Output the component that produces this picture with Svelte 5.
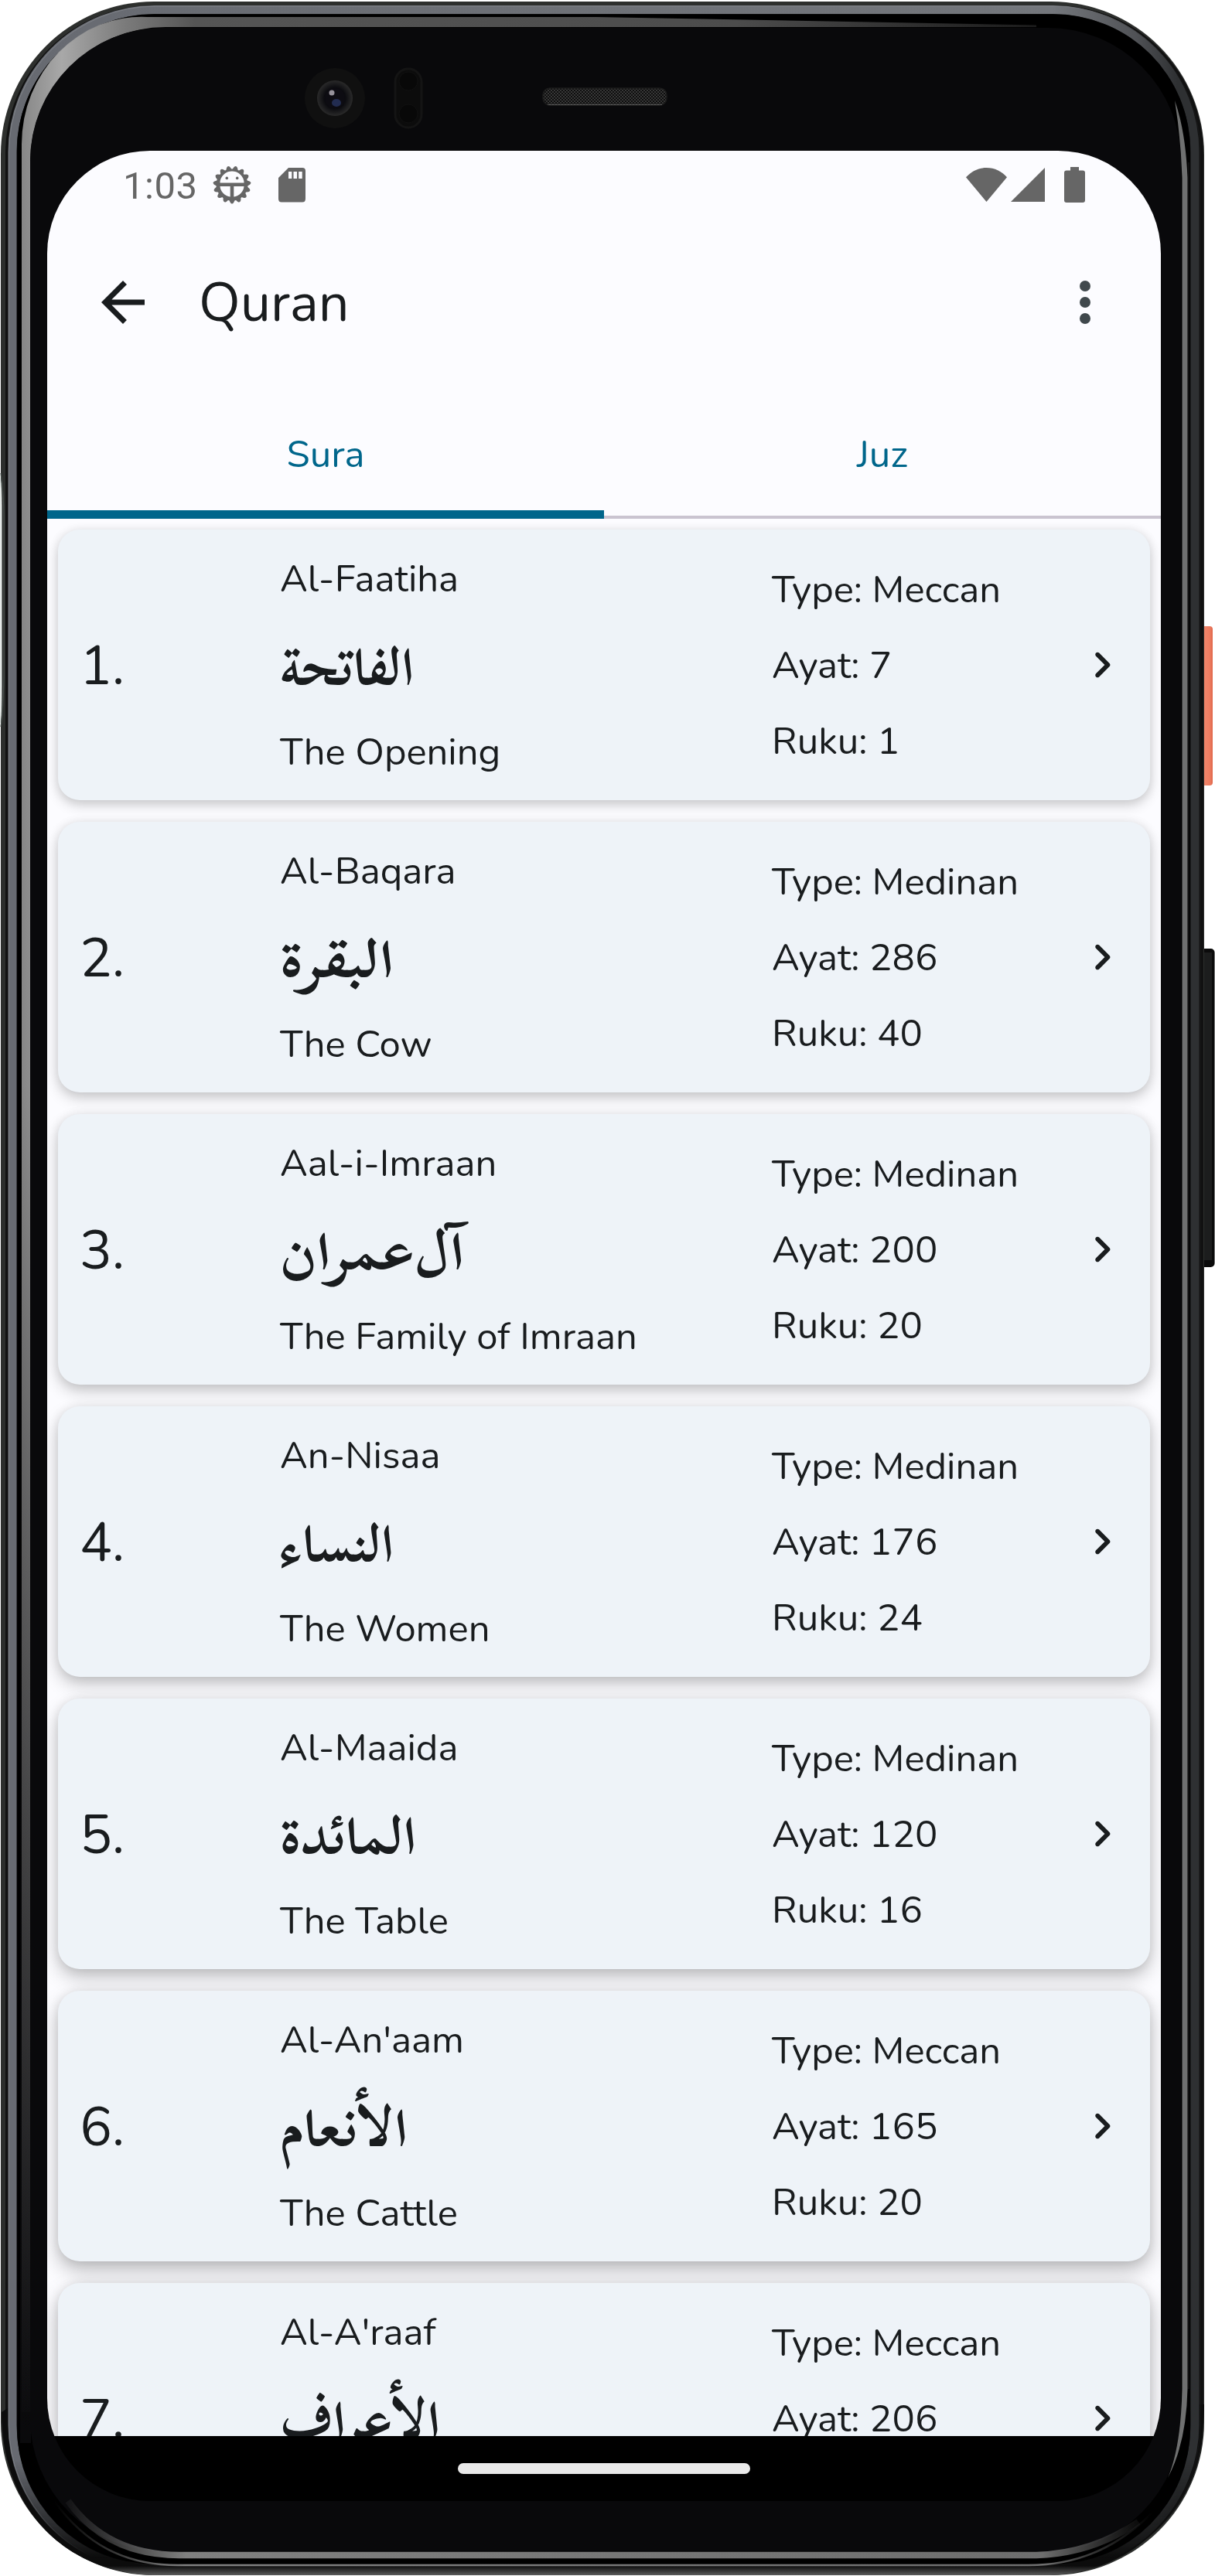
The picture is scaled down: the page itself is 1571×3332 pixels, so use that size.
<script>
  const suras = [
    { n: 1, name: 'Al-Faatiha', arabic: 'الفاتحة', width: 173, meaning: 'The Opening', type: 'Meccan', ayat: 7, ruku: 1 },
    { n: 2, name: 'Al-Baqara', arabic: 'البقرة', width: 147, meaning: 'The Cow', type: 'Medinan', ayat: 286, ruku: 40 },
    { n: 3, name: 'Aal-i-Imraan', arabic: 'آل‌عمران', width: 238, meaning: 'The Family of Imraan', type: 'Medinan', ayat: 200, ruku: 20 },
    { n: 4, name: 'An-Nisaa', arabic: 'النساء', width: 147, meaning: 'The Women', type: 'Medinan', ayat: 176, ruku: 24 },
    { n: 5, name: 'Al-Maaida', arabic: 'المائدة', width: 176, meaning: 'The Table', type: 'Medinan', ayat: 120, ruku: 16 },
    { n: 6, name: "Al-An'aam", arabic: 'الأنعام', width: 165, meaning: 'The Cattle', type: 'Meccan', ayat: 165, ruku: 20 },
    { n: 7, name: "Al-A'raaf", arabic: 'الأعراف', width: 207, meaning: 'The Heights', type: 'Meccan', ayat: 206, ruku: 24 },
  ]

  // Fifteen rounded teeth around the debug badge, one of them pointing straight down.
  const teeth = Array.from({ length: 15 }, (_, i) => 180 + i * 24)
</script>

<div class="phone">
  <svg class="frame" viewBox="0 0 1571 3332" width="1571" height="3332" aria-hidden="true">
    <defs>
      <linearGradient id="metal" x1="0" x2="1" y1="0" y2="0">
        <stop offset="0" stop-color="#676a71" />
        <stop offset="0.88" stop-color="#74777c" />
        <stop offset="0.95" stop-color="#505256" />
        <stop offset="0.985" stop-color="#2e3032" />
      </linearGradient>
      <linearGradient id="glint" x1="0" x2="1" y1="0" y2="0">
        <stop offset="0" stop-color="#8d9095" />
        <stop offset="0.88" stop-color="#84878c" />
        <stop offset="0.97" stop-color="#1c1d1d" />
      </linearGradient>
      <linearGradient id="fade" x1="0" x2="0" y1="0" y2="1">
        <stop offset="0.955" stop-color="#fff" />
        <stop offset="0.993" stop-color="#000" />
      </linearGradient>
      <mask id="fadeMask" maskUnits="userSpaceOnUse" x="0" y="0" width="1571" height="3332">
        <rect width="1571" height="3332" fill="url(#fade)" />
      </mask>
      <linearGradient id="shine" gradientUnits="userSpaceOnUse" x1="27" y1="0" x2="1350" y2="0">
        <stop offset="0" stop-color="#868686" />
        <stop offset="0.04" stop-color="#a8a8a8" />
        <stop offset="0.1" stop-color="#7c7c7c" />
        <stop offset="0.17" stop-color="#555" />
        <stop offset="0.7" stop-color="#4c4c4c" />
        <stop offset="1" stop-color="#1a1a1a" />
      </linearGradient>
      <linearGradient id="shineDown" gradientUnits="userSpaceOnUse" x1="0" y1="1400" x2="0" y2="3150">
        <stop offset="0" stop-color="#0a0a0c" stop-opacity="0" />
        <stop offset="0.5" stop-color="#0a0a0c" stop-opacity="0.5" />
        <stop offset="1" stop-color="#0a0a0c" />
      </linearGradient>
      <linearGradient id="floor" gradientUnits="userSpaceOnUse" x1="70" y1="0" x2="1490" y2="0">
        <stop offset="0" stop-color="#777" stop-opacity="0" />
        <stop offset="0.12" stop-color="#808080" />
        <stop offset="0.9" stop-color="#6e6e6e" />
        <stop offset="1" stop-color="#555" stop-opacity="0" />
      </linearGradient>
      <linearGradient id="chin" gradientUnits="userSpaceOnUse" x1="0" y1="3319" x2="0" y2="3331">
        <stop offset="0" stop-color="#0c0c0c" />
        <stop offset="1" stop-color="#5c5c5c" />
      </linearGradient>
      <linearGradient id="power" x1="0" x2="1" y1="0" y2="0">
        <stop offset="0" stop-color="#c95840" />
        <stop offset="0.3" stop-color="#f0866b" />
        <stop offset="0.75" stop-color="#ee7d62" />
        <stop offset="1" stop-color="#e0674a" />
      </linearGradient>
      <pattern id="mesh" width="4" height="4" patternUnits="userSpaceOnUse">
        <rect width="4" height="4" fill="#0e0e0e" />
        <circle cx="1" cy="1" r="0.9" fill="#4a4a4a" />
        <circle cx="3" cy="3" r="0.9" fill="#4a4a4a" />
      </pattern>
      <radialGradient id="lens" cx="0.5" cy="0.5" r="0.5">
        <stop offset="0" stop-color="#15141c" />
        <stop offset="0.6" stop-color="#0c0c10" />
        <stop offset="1" stop-color="#2a2a2a" />
      </radialGradient>
    </defs>

    <rect x="1552" y="810" width="16" height="206" rx="4" fill="url(#power)" />
    <rect x="1552" y="1227" width="18.5" height="412" rx="5" fill="#0b0b0b" />
    <rect x="1557" y="1232" width="10" height="398" fill="#1c1d1d" />

    <rect x="1" y="2" width="1556" height="3329" rx="198" fill="#2d2f2d" />
    <rect x="7" y="7" width="1549" height="3318" rx="192" fill="#111" />
    <path d="M2 3120C2 3250 90 3331 205 3331H1350C1470 3331 1557 3240 1557 3110L1540 3110C1530 3240 1450 3319 1340 3319H215C90 3319 30 3230 18 3110Z" fill="url(#chin)" />
    <rect x="16" y="12.5" width="1529" height="3308" rx="184" fill="none" stroke="url(#metal)" stroke-width="11" mask="url(#fadeMask)" />
    <rect x="11.500" y="8" width="1540.500" height="3318" rx="190" fill="none" stroke="url(#glint)" stroke-width="1" opacity="0.6" mask="url(#fadeMask)" />
    <rect x="22" y="18.5" width="1517" height="3298" rx="176" fill="#000" />
    <path d="M70 3235C110 3290 160 3318 230 3318H1330C1400 3318 1450 3290 1490 3250" fill="none" stroke="url(#floor)" stroke-width="2.5" />

    <path d="M28 3120V187A155 165 0 0 1 190 22H771L1340 32.5V35H214A175 175 0 0 0 39 211V3120Z" fill="url(#shine)" />
    <rect x="26" y="1400" width="14" height="1760" fill="url(#shineDown)" />
    <rect x="39" y="36" width="1488" height="3264" rx="172" fill="#09090b" />
    <path d="M88 3235Q138 3305 232 3305H1340Q1412 3303 1472 3262" fill="none" stroke="url(#floor)" stroke-width="8.5" />
    <path d="M1528.5 230V3090Q1527 3165 1510 3205Q1534 3160 1535.500 3090V230Q1533 170 1519 130Q1527 180 1528.500 230Z" fill="#6f7070" />
    <path d="M1537 210V3090" stroke="#1e1e1f" stroke-width="1" />
    <path d="M0 612Q2.500 625 2.500 660V880Q2.500 920 1 935H0Z" fill="#e6ebe8" />
    <path d="M1 612Q5 640 5 670V875Q4 920 1 940" fill="none" stroke="#4b534f" stroke-width="1.2" />

    <circle cx="433" cy="127" r="39" fill="#101010" />
    <circle cx="433" cy="127" r="23" fill="url(#lens)" />
    <circle cx="433" cy="127" r="13" fill="#0d0c12" />
    <ellipse cx="435" cy="133" rx="6" ry="5" fill="#222c50" />
    <circle cx="429" cy="120" r="3.500" fill="#96929a" />
    <rect x="511" y="89" width="34" height="76" rx="17" fill="#0c0c0c" stroke="#141414" stroke-width="3" />
    <circle cx="528" cy="105" r="12" fill="#080808" stroke="#111" />
    <circle cx="528" cy="147" r="12" fill="#080808" stroke="#111" />
    <rect x="702" y="114" width="160" height="22" rx="9" fill="url(#mesh)" stroke="#1b1b1b" stroke-width="1.5" />
    <path d="M708 135.500H856" stroke="#555" stroke-width="1.2" />
  </svg>

  <main class="screen">
    <div class="app">
      <div class="status">
        <span class="clock">1:03</span>
        <svg class="bug" viewBox="-25 -25 50 50">
          {#each teeth as angle}
            <path d="M-4.500 -18L-2.200 -23Q0 -26 2.200 -23L4.500 -18Z" transform="rotate({angle})" />
          {/each}
          <path fill-rule="evenodd" d="M0 -20.500A20.500 20.500 0 1 0 0 20.500A20.500 20.500 0 1 0 0 -20.500ZM-15.500 -2.500A15.500 15 0 0 1 15.500 -2.500ZM-15.500 2H-2.300V15.500A15.500 15 0 0 1 -15.500 2ZM15.500 2H2.300V15.500A15.500 15 0 0 0 15.500 2Z" />
          <circle cx="-6.700" cy="-8.600" r="1.800" />
          <circle cx="6.700" cy="-8.600" r="1.800" />
        </svg>
        <svg class="sd" viewBox="0 0 35 45">
          <path fill-rule="evenodd" d="M13 0H31Q35 0 35 4V40Q35 44.500 31 44.500H4Q0 44.500 0 40V13ZM13 5V14H17.300V5ZM19.500 5V14H24V5ZM26.200 5V14H30.700V5Z" />
        </svg>
        <svg class="wifi" viewBox="0 0 53 44">
          <path d="M26.500 44L0 12.300C7 4.500 16 0 26.500 0S46 4.500 53 12.300Z" />
        </svg>
        <svg class="signal" viewBox="0 0 44 44"><path d="M44 0V44H0Z" /></svg>
        <svg class="battery" viewBox="0 0 27 46">
          <path d="M8 0H19V4.500H24Q27 4.500 27 7.500V43Q27 46 24 46H3Q0 46 0 43V7.500Q0 4.500 3 4.500H8Z" />
        </svg>
      </div>

      <header class="bar">
        <svg class="back" viewBox="0 0 24 24">
          <path d="M20 11H7.830l5.590-5.590L12 4l-8 8 8 8 1.410-1.410L7.830 13H20v-2z" />
        </svg>
        <h1>Quran</h1>
        <svg class="more" viewBox="0 0 24 24">
          <circle cx="12" cy="6" r="2" /><circle cx="12" cy="12" r="2" /><circle cx="12" cy="18" r="2" />
        </svg>
      </header>

      <nav class="tabs">
        <div class="tab active">Sura</div>
        <div class="tab">Juz</div>
      </nav>

      <section class="list">
        {#each suras as s, i}
          <article class="card" style:--depth={0.16 + i * 0.018} style:--drop="{7 + i}px" style:--blur="{16 + i * 2}px">
            <div class="number">{s.n}.</div>
            <div class="names">
              <div class="line">{s.name}</div>
              <svg class="arabic" width={s.width} height="84" viewBox="0 0 {s.width} 84">
                <text x={s.width} y="67" direction="rtl" textLength={s.width} lengthAdjust="spacingAndGlyphs">{s.arabic}</text>
              </svg>
              <div class="line">{s.meaning}</div>
            </div>
            <div class="details">
              <div class="line">Type: {s.type}</div>
              <div class="line">Ayat: {s.ayat}</div>
              <div class="line">Ruku: {s.ruku}</div>
            </div>
            <svg class="chevron" viewBox="0 0 24 24">
              <path d="M9.290 15.880L13.170 12 9.290 8.120c-.39-.39-.39-1.020 0-1.410.39-.39 1.020-.39 1.410 0l4.590 4.590c.39.39.39 1.020 0 1.410L10.700 17.300c-.39.39-1.020.39-1.410 0-.38-.39-.39-1.030 0-1.420z" />
            </svg>
          </article>
        {/each}
      </section>
    </div>
    <footer class="gesture"><div class="pill"></div></footer>
  </main>
</div>

<style>
  :global(body) { background: #fff; }
  .phone {
    position: relative;
    width: 1571px;
    height: 3332px;
    box-sizing: border-box;
    padding: 195px 70px 97px 61px;
    overflow: hidden;
    font-family: Nunito, 'Nunito Sans', 'Open Sans', sans-serif;
    color: #191c1e;
  }
  .frame { position: absolute; inset: 0; }
  .screen {
    position: relative;
    width: 1440px;
    height: 3040px;
    border-radius: 133px;
    overflow: hidden;
    background: #000;
    display: flex;
    flex-direction: column;
  }
  .app { height: 2956px; overflow: hidden; background: #fcfcff; }
  svg { display: block; flex: none; }
  .status {
    height: 90px;
    display: flex;
    align-items: center;
    padding: 0 98px 0 98px;
    box-sizing: border-box;
    color: #666;
    fill: #666;
  }
  .clock { font: 400 49px/58px Roboto, sans-serif; width: 116px; padding-top: 2px; letter-spacing: 0.5px; }
  .bug { width: 50px; height: 50px; margin-top: -2px; }
  .sd { width: 35px; height: 45px; margin: -1px 0 0 35px; }
  .wifi { width: 53px; height: 44px; margin-left: auto; margin-top: -3px; }
  .signal { width: 44px; height: 44px; margin: -2px 25px 0 5px; }
  .battery { width: 27px; height: 46px; margin-top: -2px; }
  .bar {
    height: 212px;
    display: flex;
    align-items: center;
    padding: 0 56px;
  }
  .back, .more { width: 84px; height: 84px; }
  .back { fill: #191c1e; }
  .more { fill: #40484c; margin-left: auto; }
  h1 { margin: 0 0 0 56px; padding-top: 1px; font-size: 70px; line-height: 98px; font-weight: 400; }
  .tabs {
    display: flex;
    height: 174px;
    box-sizing: border-box;
    box-shadow: inset 0 -4px #cac4d0;
  }
  .tab {
    flex: 1;
    padding-top: 56px;
    text-align: center;
    font-size: 49px;
    line-height: 70px;
    color: #00668b;
  }
  .active { box-shadow: inset 0 -11px #00668b; }
  .list {
    display: flex;
    flex-direction: column;
    gap: 28px;
    padding: 14px;
  }
  .card {
    height: 350px;
    flex: none;
    box-sizing: border-box;
    display: grid;
    grid-template-columns: 259px 636px 1fr 70px;
    align-items: center;
    padding: 0 27px 0 28px;
    border-radius: 28px;
    background: #eef3f8;
    box-shadow: 0 var(--drop) var(--blur) rgb(0 0 0 / var(--depth)), 0 1px 14px rgb(0 0 0 / 0.09);
  }
  .number { font-size: 70px; line-height: 98px; padding-top: 3px; }
  .line { font-size: 49px; line-height: 70px; white-space: nowrap; }
  .names { padding-top: 2px; }
  .arabic { overflow: visible; margin: 35px 0; }
  .arabic text {
    font-family: 'Scheherazade New', 'Noto Naskh Arabic', sans-serif;
    font-size: 69px;
    font-weight: 700;
    fill: #191c1e;
  }
  .details { display: flex; flex-direction: column; gap: 28px; padding-top: 1px; }
  .chevron { width: 70px; height: 70px; fill: #191c1e; }
  .gesture { height: 84px; display: flex; align-items: center; justify-content: center; }
  .pill { width: 378px; height: 14px; border-radius: 7px; background: #e9e9e9; }
</style>
